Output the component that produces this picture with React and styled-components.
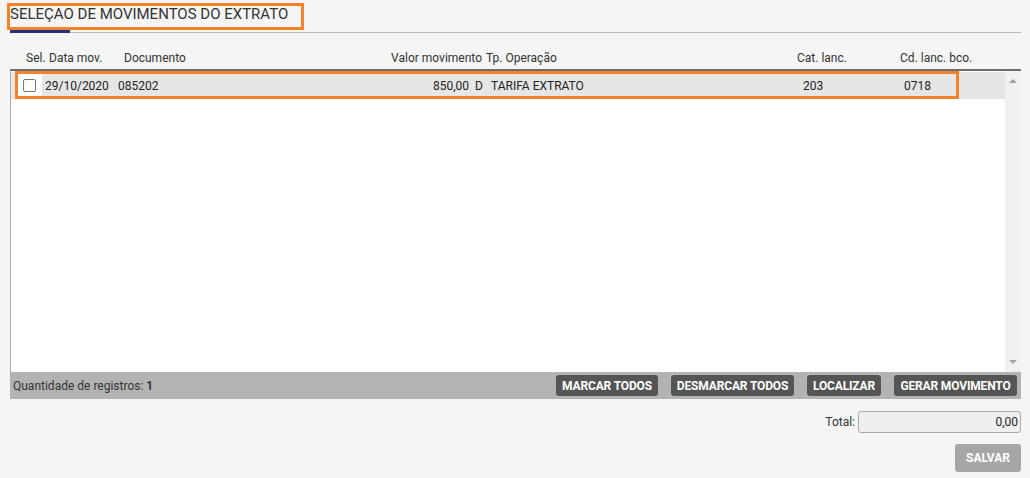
import React from "react";
import styled, { createGlobalStyle } from "styled-components";

const Global = createGlobalStyle`
  html, body { margin: 0; padding: 0; background: #f5f5f5; }
  body { font-family: Roboto, "Liberation Sans", Arial, sans-serif; color: #333; }
  * { box-sizing: border-box; }
`;

const Page = styled.div`
  width: 1030px;
  height: 478px;
  padding: 0 9px 0 10px;
  display: flex;
  flex-direction: column;
  background: #f5f5f5;
`;

const TabBar = styled.div`
  height: 33px;
  border-bottom: 1px solid #b8b8b8;
  display: flex;
  align-items: flex-end;
`;

const Tab = styled.div`
  position: relative;
  height: 33px;
  display: flex;
  align-items: flex-start;
  padding-top: 6px;
  font-size: 15px;
  color: #333;
  white-space: nowrap;
  &::after {
    content: "";
    position: absolute;
    left: 0;
    bottom: -1px;
    width: 60px;
    height: 3px;
    background: #24307a;
  }
`;

const Highlight = styled.span`
  position: absolute;
  left: -3px;
  top: 4px;
  width: 297px;
  height: 27px;
  border: 3px solid #f5822a;
  pointer-events: none;
`;

const HeaderRow = styled.div`
  display: grid;
  grid-template-columns: 37px 73px 264px 100px 306px 103px 1fr;
  height: 36px;
  align-items: center;
  padding-top: 13px;
  font-size: 12px;
  color: #333;
  white-space: nowrap;
`;

const HCell = styled.div`
  padding-left: ${(p) => p.$pl || 0}px;
  padding-right: ${(p) => p.$pr || 0}px;
  text-align: ${(p) => (p.$right ? "right" : "left")};
`;

const TableBox = styled.div`
  height: 303px;
  background: #fff;
  border-top: 2px solid #6e6e6e;
  border-left: 1px solid #a9a9a9;
  display: flex;
`;

const Body = styled.div`
  flex: 1;
  padding-top: 1px;
`;

const Row = styled.div`
  position: relative;
  display: grid;
  grid-template-columns: 5px 26px 76px 259px 92px 22px 312px 101px 1fr;
  height: 27px;
  align-items: center;
  background: #e6e6e6;
  font-size: 12px;
  color: #222;
  white-space: nowrap;
`;

const Cell = styled.div`
  padding-left: ${(p) => p.$pl || 0}px;
  padding-right: ${(p) => p.$pr || 0}px;
  text-align: ${(p) => (p.$right ? "right" : "left")};
`;

const CheckCell = styled.div`
  height: 27px;
  background: #fff;
  display: flex;
  align-items: center;
  padding-left: 7px;
`;

const Check = styled.span`
  width: 13px;
  height: 13px;
  border: 1px solid #767676;
  border-radius: 2px;
  background: #fff;
`;

const RowMark = styled.span`
  position: absolute;
  left: 4px;
  top: -1px;
  width: 944px;
  height: 28px;
  border: 3px solid #f5822a;
  pointer-events: none;
`;

const Scroll = styled.div`
  width: 16px;
  background: #f1f1f1;
  display: flex;
  flex-direction: column;
  justify-content: space-between;
  align-items: center;
  padding: 8px 0 8px;
`;

const Arrow = styled.span`
  width: 0;
  height: 0;
  border-left: 4px solid transparent;
  border-right: 4px solid transparent;
  ${(p) =>
    p.$down
      ? "border-top: 4px solid #a3a3a3;"
      : "border-bottom: 4px solid #a3a3a3;"}
`;

const Footer = styled.div`
  height: 27px;
  background: #b3b3b3;
  display: flex;
  align-items: center;
  padding: 0 4px 0 3px;
  font-size: 12px;
  color: #333;
`;

const Count = styled.div`
  flex: 1;
  b { font-weight: 500; color: #222; }
`;

const Buttons = styled.div`
  display: flex;
  gap: 13px;
`;

const DarkButton = styled.button`
  width: ${(p) => p.$w}px;
  height: 21px;
  padding: 0;
  border: none;
  border-radius: 3px;
  background: #555;
  color: #fff;
  font-family: Roboto, "Liberation Sans", Arial, sans-serif;
  font-weight: 700;
  font-size: 12px;
  letter-spacing: -0.15px;
  white-space: nowrap;
  cursor: pointer;
`;

const TotalRow = styled.div`
  margin-top: 12px;
  display: flex;
  justify-content: flex-end;
  align-items: center;
  gap: 3px;
  font-size: 12px;
  color: #333;
`;

const TotalInput = styled.div`
  width: 163px;
  height: 22px;
  border: 1px solid #a8a8a8;
  border-radius: 3px;
  background: #efefef;
  text-align: right;
  padding: 3px 2px 0 0;
  font-size: 12px;
  color: #222;
`;

const SaveRow = styled.div`
  margin-top: 11px;
  display: flex;
  justify-content: flex-end;
`;

const SaveButton = styled.button`
  width: 66px;
  height: 28px;
  border: none;
  border-radius: 3px;
  background: #a6a6a6;
  color: #fff;
  font-family: Roboto, "Liberation Sans", Arial, sans-serif;
  font-weight: 700;
  font-size: 12px;
`;

export default function App() {
  return (
    <>
      <Global />
      <Page>
        <TabBar>
          <Tab>
            SELEÇAO DE MOVIMENTOS DO EXTRATO
            <Highlight />
          </Tab>
        </TabBar>
        <HeaderRow>
          <HCell $pl={16}>Sel.</HCell>
          <HCell $pl={2}>Data mov.</HCell>
          <HCell $pl={4}>Documento</HCell>
          <HCell $right $pr={2}>Valor movimento</HCell>
          <HCell $pl={2}>Tp. Operação</HCell>
          <HCell $pl={7}>Cat. lanc.</HCell>
          <HCell $pl={7}>Cd. lanc. bco.</HCell>
        </HeaderRow>
        <TableBox>
          <Body>
            <Row>
              <span />
              <CheckCell>
                <Check />
              </CheckCell>
              <Cell $pl={3}>29/10/2020</Cell>
              <Cell>085202</Cell>
              <Cell $right>850,00</Cell>
              <Cell $pl={6}>D</Cell>
              <Cell>TARIFA EXTRATO</Cell>
              <Cell>203</Cell>
              <Cell>0718</Cell>
              <RowMark />
            </Row>
          </Body>
          <Scroll>
            <Arrow />
            <Arrow $down />
          </Scroll>
        </TableBox>
        <Footer>
          <Count>
            Quantidade de registros: <b>1</b>
          </Count>
          <Buttons>
            <DarkButton $w={102}>MARCAR TODOS</DarkButton>
            <DarkButton $w={123}>DESMARCAR TODOS</DarkButton>
            <DarkButton $w={74}>LOCALIZAR</DarkButton>
            <DarkButton $w={123}>GERAR MOVIMENTO</DarkButton>
          </Buttons>
        </Footer>
        <TotalRow>
          Total:
          <TotalInput>0,00</TotalInput>
        </TotalRow>
        <SaveRow>
          <SaveButton>SALVAR</SaveButton>
        </SaveRow>
      </Page>
    </>
  );
}
